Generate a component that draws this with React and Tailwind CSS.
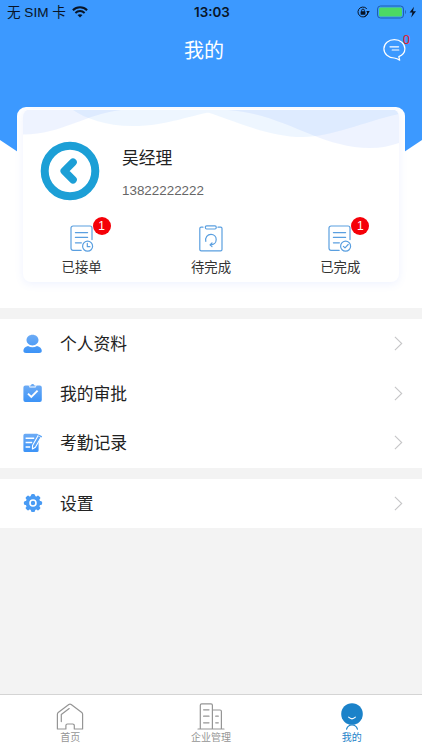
import React from 'react';

const line = {
  fill: 'none',
  stroke: 'currentColor',
  strokeLinecap: 'round',
  strokeLinejoin: 'round',
};

const WifiIcon = (props) => (
  <svg width="16" height="12" viewBox="0 0 16 12" {...props} {...line} strokeLinecap="butt">
    <path d="M0.9 4.3C4.8 0.3 11.2 0.3 15.1 4.3" strokeWidth="2" />
    <path d="M3.4 7C6 4.4 10 4.4 12.6 7" strokeWidth="1.9" />
    <path d="M8 11.6 5.5 9.1C6.9 7.8 9.1 7.8 10.5 9.1Z" fill="currentColor" stroke="none" />
  </svg>
);

const RotationLockIcon = (props) => (
  <svg width="13" height="12" viewBox="0 0 13 12" {...props} {...line}>
    <path d="M11 6A5 5 0 1 1 9.5 2.4M11 5.6A5 5 0 0 1 8 10.6" strokeWidth="1" />
    <path d="M9.2 5h3.6L11 7.4Z" fill="currentColor" stroke="none" />
    <rect x="3.6" y="5.2" width="4.8" height="3.6" rx="0.5" fill="currentColor" stroke="none" />
    <path d="M4.6 5.4V4.5a1.4 1.4 0 0 1 2.8 0v0.9" strokeWidth="0.9" />
  </svg>
);

const BatteryIcon = (props) => (
  <svg width="40" height="14" viewBox="0 0 40 14" {...props}>
    <rect x="0.5" y="1" width="26" height="12" rx="3" fill="none" stroke="#1f5fae" />
    <rect x="2" y="2.5" width="23" height="9" rx="1.6" fill="#4cd964" />
    <path d="M28 5c1.2 0.5 1.2 3.5 0 4Z" fill="#1f5fae" />
    <path d="M37 1.8 32.6 7.6h2.8L34.2 12.4 39 6.2h-3Z" fill="#081426" />
  </svg>
);

const MessageIcon = (props) => (
  <svg width="23" height="24" viewBox="0 0 23 24" {...props} {...line} strokeWidth="1.2">
    <path d="M16.7 22.2 15.8 18.6C19.5 17.2 21.9 14.2 21.9 10.7C21.9 5.5 17.2 1.6 11.4 1.6S0.9 5.5 0.9 10.7C0.9 15.8 5.5 19.9 11.2 20C13.3 20.3 15 21 16.7 22.2Z" />
    <path d="M7 8.8h8.6M9.2 12h6.6" />
  </svg>
);

const AcceptedIcon = (props) => (
  <svg width="24" height="28" viewBox="0 0 24 28" {...props} {...line} strokeWidth="1.2">
    <path d="M11.2 25.3H3a2 2 0 0 1-2-2V3a2 2 0 0 1 2-2h17a2 2 0 0 1 2 2v11.6" />
    <path d="M5.4 7.6h12.2M5.4 12.4h12.2M5.4 17.8h6" />
    <circle cx="17.6" cy="21.2" r="5" />
    <path d="M17.3 18.4v3.3h2.6" />
  </svg>
);

const PendingIcon = (props) => (
  <svg width="24" height="28" viewBox="0 0 24 28" {...props} {...line} strokeWidth="1.2">
    <path d="M4 2.2H2.2A1.4 1.4 0 0 0 0.8 3.6v20.8a1.4 1.4 0 0 0 1.4 1.4h19.4a1.4 1.4 0 0 0 1.4-1.4V3.6a1.4 1.4 0 0 0-1.4-1.4H19" />
    <rect x="6.4" y="0.8" width="10.8" height="3.2" rx="1.2" />
    <path d="M6.8 16.4C6 12.6 8.4 9.4 12 9.4C15.1 9.4 17.2 11.7 17.2 14.6C17.2 17.6 14.8 19.8 11.8 19.8" />
    <path d="M13 18 11 19.9l2 1.7" />
  </svg>
);

const DoneIcon = (props) => (
  <svg width="24" height="28" viewBox="0 0 24 28" {...props} {...line} strokeWidth="1.2">
    <path d="M11.2 25.3H3a2 2 0 0 1-2-2V3a2 2 0 0 1 2-2h17a2 2 0 0 1 2 2v11.6" />
    <path d="M5.4 7.6h12.2M5.4 12.4h12.2M5.4 17.8h6" />
    <circle cx="17.6" cy="21.2" r="5" />
    <path d="M15.4 21.3 17 22.9l3.2-3.4" />
  </svg>
);

const IconGradient = ({ id }) => (
  <defs>
    <linearGradient id={id} x1="0" y1="0" x2="0" y2="1">
      <stop offset="0" stopColor="#6cabf5" />
      <stop offset="1" stopColor="#3c93f7" />
    </linearGradient>
  </defs>
);

const ProfileIcon = (props) => (
  <svg width="20" height="20" viewBox="0 0 20 20" {...props}>
    <IconGradient id="profile" />
    <path d="M9.5 0.8C12.8 0.8 15.5 3 15.5 6.1S12.8 11.4 9.5 11.4S3.5 9.2 3.5 6.1S6.2 0.8 9.5 0.8ZM5 12Q9.5 14.4 14 12C17 12.6 18.8 14.6 18.8 16.8C18.8 18.3 17.8 19 16.2 19H3C1.4 19 0.4 18.3 0.4 16.8C0.4 14.6 2 12.6 5 12Z" fill="url(#profile)" />
  </svg>
);

const ApprovalIcon = (props) => (
  <svg width="20" height="20" viewBox="0 0 20 20" {...props}>
    <IconGradient id="approval" />
    <path d="M2.4 2.6H5.6L6.6 4.6H12.6L13.6 2.6H16.8a2 2 0 0 1 2 2V17a2 2 0 0 1-2 2H2.4a2 2 0 0 1-2-2V4.6a2 2 0 0 1 2-2Z" fill="url(#approval)" />
    <path d="M6.6 3.4V2.6H7.8C8 0.4 11.2 0.4 11.4 2.6H12.6V3.4Z" fill="#6cabf5" />
    <path d="M5 10.6 8.3 14 14.6 7.6" fill="none" stroke="#fff" strokeWidth="1.9" />
  </svg>
);

const AttendanceIcon = (props) => (
  <svg width="20" height="20" viewBox="0 0 20 20" {...props}>
    <IconGradient id="attendance" />
    <path d="M2 0.8H14a1.6 1.6 0 0 1 1.6 1.6V17.4A1.6 1.6 0 0 1 14 19H2A1.6 1.6 0 0 1 0.4 17.4V2.4A1.6 1.6 0 0 1 2 0.8Z" fill="url(#attendance)" />
    <path d="M2.6 5.2h8.6M2.6 9.6h6.6M2.6 14h4.6" stroke="#fff" strokeWidth="1.5" />
    <path d="M15.2 2.4 18.2 4 12.4 14.2 9.4 16 9.5 12.4Z" fill="#5aa3f6" stroke="#fff" strokeWidth="1.1" strokeLinejoin="round" />
    <path d="M15.4 2 18.8 3.9" stroke="#5aa3f6" strokeWidth="1.4" />
  </svg>
);

const SettingsIcon = (props) => (
  <svg width="20" height="20" viewBox="0 0 20 20" {...props}>
    <g fill="#499bf4">
      {[0, 45, 90, 135].map((angle) => (
        <rect key={angle} x="7.9" y="0.9" width="4.2" height="18.2" rx="1.5" transform={`rotate(${angle} 10 10)`} />
      ))}
      <circle cx="10" cy="10" r="7.3" />
    </g>
    <circle cx="10" cy="10" r="3" fill="none" stroke="#fff" strokeWidth="1.6" />
  </svg>
);

const ChevronIcon = (props) => (
  <svg width="9" height="15" viewBox="0 0 9 15" {...props}>
    <path d="M0.9 0.9 7.7 7.5 0.9 14.1" fill="none" stroke="#c6c6c8" strokeWidth="1.1" />
  </svg>
);

const HomeIcon = (props) => (
  <svg width="28" height="28" viewBox="0 0 28 28" {...props} {...line} strokeWidth="1.2">
    <path d="M1.4 26V11.2Q1.4 10.2 2.2 9.6L12.8 1.5Q14 0.7 15.2 1.5L25.8 9.6Q26.6 10.2 26.6 11.2V26H18.3V22.6a1.6 1.6 0 0 0-1.6-1.6H11.5a1.6 1.6 0 0 0-1.6 1.6V26Z" />
    <path d="M5.3 18.6V11.6L13.2 5.6" />
  </svg>
);

const CompanyIcon = (props) => (
  <svg width="28" height="28" viewBox="0 0 28 28" {...props} {...line} strokeWidth="1.2">
    <path d="M1 26h26M3.3 26V2.2a1.4 1.4 0 0 1 1.4-1.4H14a1.4 1.4 0 0 1 1.4 1.4V26M15.4 7h7.6a1.4 1.4 0 0 1 1.4 1.4V26" />
    <path d="M6.6 6.8h5.4M6.6 13.2h5.4M6.6 19.8h5.4M18.7 13.2h2.6M18.7 19.8h2.6" />
  </svg>
);

const MineIcon = (props) => (
  <svg width="28" height="28" viewBox="0 0 28 28" {...props} {...line}>
    <circle cx="14" cy="11" r="10.8" fill="currentColor" stroke="none" />
    <path d="M10.6 14.2Q14 17.4 17.4 14.2" stroke="#fff" strokeWidth="1.1" />
    <path d="M8.6 26.1C9.3 23.5 11 22 14 22S18.7 23.5 19.4 26.1" strokeWidth="1.2" />
  </svg>
);

const CardWaves = (props) => (
  <svg width="376" height="42" viewBox="0 0 376 42" {...props}>
    <path d="M0 1H98C62 5 40 25 0 25.5ZM205 1C262 5 296 39 347 39C358 39 367 37 376 34V1Z" fill="#4b7dfa" fillOpacity="0.095" />
    <path d="M50 1C62 9 82 17 110 17C145 17 165 6 200 1ZM176 1C205 8 240 28 280 28C308 28 340 13 376 5V1Z" fill="#4196fa" fillOpacity="0.09" />
  </svg>
);

const orderStats = [
  { label: '已接单', icon: <AcceptedIcon />, count: 1 },
  { label: '待完成', icon: <PendingIcon />, count: null },
  { label: '已完成', icon: <DoneIcon />, count: 1 },
];

const menuGroups = [
  [
    { label: '个人资料', icon: <ProfileIcon /> },
    { label: '我的审批', icon: <ApprovalIcon /> },
    { label: '考勤记录', icon: <AttendanceIcon /> },
  ],
  [{ label: '设置', icon: <SettingsIcon /> }],
];

const tabs = [
  { label: '首页', icon: <HomeIcon />, active: false },
  { label: '企业管理', icon: <CompanyIcon />, active: false },
  { label: '我的', icon: <MineIcon />, active: true },
];

function StatusBar() {
  return (
    <div className="grid grid-cols-3 items-center h-6 pl-[7px] pr-[5px] text-[#081426]">
      <div className="flex items-center gap-[6px] text-[13.6px] leading-none">
        <span className="pt-[2px]">无 SIM 卡</span>
        <WifiIcon />
      </div>
      <span className="pt-px text-center text-[13.4px] leading-none font-semibold font-[Inter]">13:03</span>
      <div className="flex items-center justify-end gap-[7px]">
        <RotationLockIcon />
        <BatteryIcon />
      </div>
    </div>
  );
}

function ProfileCard() {
  return (
    <div className="mt-[32px] mx-[17px] px-[6px] pt-[2px] bg-white rounded-[9px]">
      <div className="relative h-[173px] rounded-lg overflow-hidden shadow-[0_2px_8px_rgba(90,130,255,0.1)]">
        <CardWaves className="absolute top-0 left-0" />
        <div className="relative flex items-center pl-[17px] pt-[31px]">
          <svg width="60" height="60" viewBox="0 0 60 60">
            <circle cx="30" cy="30" r="25.3" fill="#fff" stroke="#1c9fd6" strokeWidth="8" />
            <path d="M33 21.3 24.3 30 33 38.7" fill="none" stroke="#1c9fd6" strokeWidth="7.6" strokeLinecap="round" strokeLinejoin="round" />
          </svg>
          <div className="ml-[22px] pt-[7px]">
            <h2 className="text-[16.8px] leading-6 text-[#222]">吴经理</h2>
            <p className="mt-[10px] text-[13.4px] leading-5 text-[#666]">13822222222</p>
          </div>
        </div>
        <div className="grid grid-cols-3 mt-[24px] -mx-[6px]">
          {orderStats.map((item) => (
            <div key={item.label} className="flex flex-col items-center">
              <div className="relative text-[#5a9fe0]">
                {item.icon}
                {item.count && (
                  <span className="absolute -top-[8px] left-[23px] w-[18px] h-[18px] rounded-full bg-[#f50008] text-white text-[12px] leading-[18px] text-center">
                    {item.count}
                  </span>
                )}
              </div>
              <span className="mt-[5px] text-[13.4px] leading-5 text-[#333]">{item.label}</span>
            </div>
          ))}
        </div>
      </div>
    </div>
  );
}

export default function App() {
  return (
    <div className="flex flex-col w-full h-screen bg-[#f3f3f3] overflow-hidden font-['Liberation_Sans','Noto_Sans_CJK_SC',sans-serif]">
      <header className="relative h-[308px] shrink-0 bg-white">
        {/* Blue backdrop that narrows towards the middle */}
        <div className="absolute inset-x-0 top-0 h-[180px] bg-[#3c99ff] [clip-path:polygon(0_0,100%_0,100%_140px,362px_180px,60px_180px,0_140px)]" />
        <div className="relative">
          <StatusBar />
          <div className="flex items-center justify-between h-[51px] pl-[184px] pr-[16px]">
            <h1 className="pt-[2px] text-[20px] leading-7 text-white">我的</h1>
            <div className="relative text-white">
              <MessageIcon />
              <span className="absolute -top-[6px] right-[-4px] text-[13px] leading-4 text-[#e0202c] font-[Roboto]">0</span>
            </div>
          </div>
          <ProfileCard />
        </div>
      </header>

      <main className="flex-1 flex flex-col gap-[11px] pt-[11px]">
        {menuGroups.map((group) => (
          <ul key={group[0].label} className="bg-white">
            {group.map((item) => (
              <li key={item.label} className="flex items-center h-[49.5px] pl-[23px] pr-[19px]">
                {item.icon}
                <span className="flex-1 ml-[17px] pt-[3px] text-[16.8px] leading-6 text-[#222]">{item.label}</span>
                <ChevronIcon />
              </li>
            ))}
          </ul>
        ))}
      </main>

      <nav className="grid grid-cols-3 h-14 shrink-0 bg-white border-t border-[#d4d4d4]">
        {tabs.map((tab) => (
          <a key={tab.label} className={`flex flex-col items-center pt-2 ${tab.active ? 'text-[#1b82c9]' : 'text-[#959595]'}`}>
            {tab.icon}
            <span className="mt-px text-[10px] leading-3">{tab.label}</span>
          </a>
        ))}
      </nav>
    </div>
  );
}
